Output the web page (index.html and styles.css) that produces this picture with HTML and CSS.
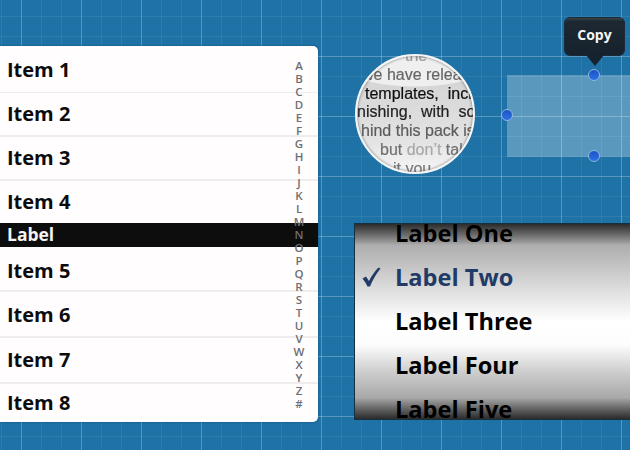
FILE: index.html
```html
<!DOCTYPE html>
<html lang="en">
<head>
<meta charset="utf-8">
<title>UI kit</title>
<link rel="stylesheet" href="styles.css">
</head>
<body>
<main class="canvas">
  <section class="list">
    <div class="row r1">Item 1</div>
    <div class="row r2">Item 2</div>
    <div class="row r3">Item 3</div>
    <div class="row r4">Item 4</div>
    <div class="band">Label</div>
    <div class="row r5">Item 5</div>
    <div class="row r6">Item 6</div>
    <div class="row r7">Item 7</div>
    <div class="row r8">Item 8</div>
    <div class="index">
      <span>A</span><span>B</span><span>C</span><span>D</span><span>E</span><span>F</span><span>G</span><span>H</span><span>I</span><span>J</span><span>K</span><span>L</span><span>M</span><span>N</span><span>O</span><span>P</span><span>Q</span><span>R</span><span>S</span><span>T</span><span>U</span><span>V</span><span>W</span><span>X</span><span>Y</span><span>Z</span><span>#</span>
    </div>
  </section>

  <div class="lens">
    <div class="lens-text">
      <p class="l-a">the</p>
      <p class="l-b">we have relea</p>
      <p class="l-c">templates, &nbsp;incl</p>
      <p class="l-d">nishing, &nbsp;with &nbsp;sou</p>
      <p class="l-e">hind this pack is</p>
      <p class="l-f">but <span class="fade">don’t</span> tal</p>
      <p class="l-g">it you</p>
    </div>
    <div class="lens-rim"></div>
  </div>

  <div class="selection"></div>
  <span class="handle h-top"></span>
  <span class="handle h-left"></span>
  <span class="handle h-bottom"></span>

  <div class="tip">Copy</div>

  <section class="picker">
    <div class="opt">Label One</div>
    <div class="opt opt-on"><svg class="check" viewBox="0 0 20 20" aria-hidden="true"><path d="M1.5 11.5 L5 9.5 L8 14 C10.500 9 13.500 4.500 17.500 0.500 L19.500 1.500 C15 7 11.500 13 9 19.500 L6.500 19.500 C5 16.500 3.500 14 1.500 11.500 Z"/></svg>Label Two</div>
    <div class="opt">Label Three</div>
    <div class="opt">Label Four</div>
    <div class="opt">Label Five</div>
    <div class="picker-shade"></div>
  </section>
</main>
</body>
</html>
```
FILE: styles.css
```css
* { box-sizing: border-box; margin: 0; padding: 0; }
html, body { width: 630px; height: 450px; overflow: hidden; }
body { font-family: "Open Sans", "DejaVu Sans", sans-serif; background: #1e72a6; }

.canvas {
  position: relative;
  width: 630px;
  height: 450px;
  overflow: hidden;
  background-color: #1e72a6;
  background-image:
    linear-gradient(90deg, rgba(255,255,255,.2) 1px, transparent 1px),
    linear-gradient(0deg, rgba(255,255,255,.2) 1px, transparent 1px),
    linear-gradient(90deg, rgba(255,255,255,.07) 1px, transparent 1px),
    linear-gradient(0deg, rgba(255,255,255,.07) 1px, transparent 1px);
  background-size: 60px 60px, 60px 60px, 20px 20px, 20px 20px;
  background-position: 21px 0, 0 57px, 1px 0, 0 17px;
}

/* list */
.list {
  position: absolute;
  left: 0; top: 46px;
  width: 318px; height: 376px;
  background: #fffdfe;
  border-radius: 0 5px 5px 0;
  box-shadow: 0 0 2px rgba(10,40,70,.6);
  color: #0c0c0c;
  font-weight: 700;
  font-size: 20px;
}
.row { display: flex; align-items: center; padding-left: 7px; border-bottom: 2px solid #eeedee; }
.r1 { height: 47px; border-bottom-width: 1px; }
.r2, .r3 { height: 44px; padding-bottom: 2px; }
.r4 { height: 42px; border-bottom: 0; padding-bottom: 2px; }
.band {
  display: flex; align-items: center;
  height: 24px;
  padding-left: 7px;
  background: #0d0d0d;
  color: #f4f4f4;
  font-size: 17.5px;
  line-height: 1;
}
.r5 { height: 45px; padding-top: 4px; }
.r6 { height: 46px; }
.r7 { height: 46px; padding-bottom: 2px; }
.r8 { height: 38px; border-bottom: 0; padding-bottom: 2px; }

.index {
  position: absolute;
  right: 9px; top: 13px;
  width: 20px;
  display: flex; flex-direction: column; align-items: center;
  font-size: 11.5px; font-weight: 600;
  line-height: 13px;
  color: #6d6e72;
}

/* magnifier */
.lens {
  position: absolute;
  left: 355px; top: 54px;
  width: 120px; height: 120px;
  border-radius: 50%;
  overflow: hidden;
  background:
    radial-gradient(ellipse 95px 38px at 50% -7px, #efefef 0 97%, transparent 100%),
    linear-gradient(#d6d6d6 25%, #dedede 55%, #e4e4e4 75%, #f6f6f6 100%);
  border: 2px solid #f5f5f5;
}
.lens-text {
  display: flex; flex-direction: column; align-items: flex-start;
  margin-top: -10px;
  font-family: "Liberation Sans", Arial, sans-serif;
  font-size: 16px;
  line-height: 19px;
  white-space: nowrap;
  -webkit-text-stroke: .2px currentColor;
  filter: blur(.3px);
}
.lens-text p { height: 18.8px; }
.l-a { margin-left: 48px; color: #9a9a9a; }
.l-b { margin-left: 5px; color: #666; }
.l-c { margin-left: 8px; color: #0e0e0e; }
.l-d { margin-left: 0; color: #222; }
.l-e { margin-left: 4px; color: #5c5c5c; }
.l-f { margin-left: 23px; color: #707070; }
.fade { color: #a8a8a8; }
.l-g { margin-left: 36px; color: #777; }
.lens-rim {
  position: absolute; inset: 0;
  border-radius: 50%;
  box-shadow: inset 0 0 3px rgba(50,50,50,.7);
}

/* selection */
.selection {
  position: absolute;
  left: 507px; top: 75px;
  width: 123px; height: 82px;
  background: rgba(255,255,255,.27);
}
.handle {
  position: absolute;
  width: 12px; height: 12px;
  border-radius: 50%;
  border: 1px solid #8fb6dc;
  background: linear-gradient(#1a54c4, #2d70e6);
}
.h-top { left: 588px; top: 69px; }
.h-left { left: 501px; top: 109px; }
.h-bottom { left: 588px; top: 150px; }

/* tooltip */
.tip {
  position: absolute;
  left: 564px; top: 17px;
  width: 61px; height: 39px;
  display: flex; align-items: center; justify-content: center;
  padding-bottom: 4px;
  border-radius: 6px;
  background: linear-gradient(#3a444c 0, #1d2832 9%, #16222d 100%);
  border: 1px solid #1a2a36;
  color: #f6f6f6;
  font-size: 14px; font-weight: 700;
}
.tip::after {
  content: "";
  position: absolute;
  left: 50%; top: 37px;
  margin-left: -9px;
  border-left: 9px solid transparent;
  border-right: 9px solid transparent;
  border-top: 11px solid #16222d;
}

/* picker */
.picker {
  position: absolute;
  left: 354px; top: 223px;
  width: 276px; height: 197px;
  overflow: hidden;
  border: 1px solid #15303f;
  border-right: 0;
  background: linear-gradient(#9d9d9e 0, #b4b4b5 14%, #dcdcdc 33%, #ffffff 50%, #fdfdfd 62%, #d0d0d1 75%, #ababac 88%, #999 100%);
  color: #000;
  font-size: 23.6px;
  font-weight: 700;
  line-height: 44px;
}
.opt { position: relative; height: 44px; padding-left: 40px; top: -13px; white-space: nowrap; }
.opt-on { color: #223a66; }
.check {
  position: absolute;
  left: 6px; top: 12px;
  width: 20px; height: 20px;
  fill: #223a66;
}
.picker-shade {
  position: absolute; inset: 0;
  background: linear-gradient(rgba(0,0,0,.72) 0, rgba(0,0,0,0) 11%, rgba(0,0,0,0) 89%, rgba(0,0,0,.72) 100%);
}
```
